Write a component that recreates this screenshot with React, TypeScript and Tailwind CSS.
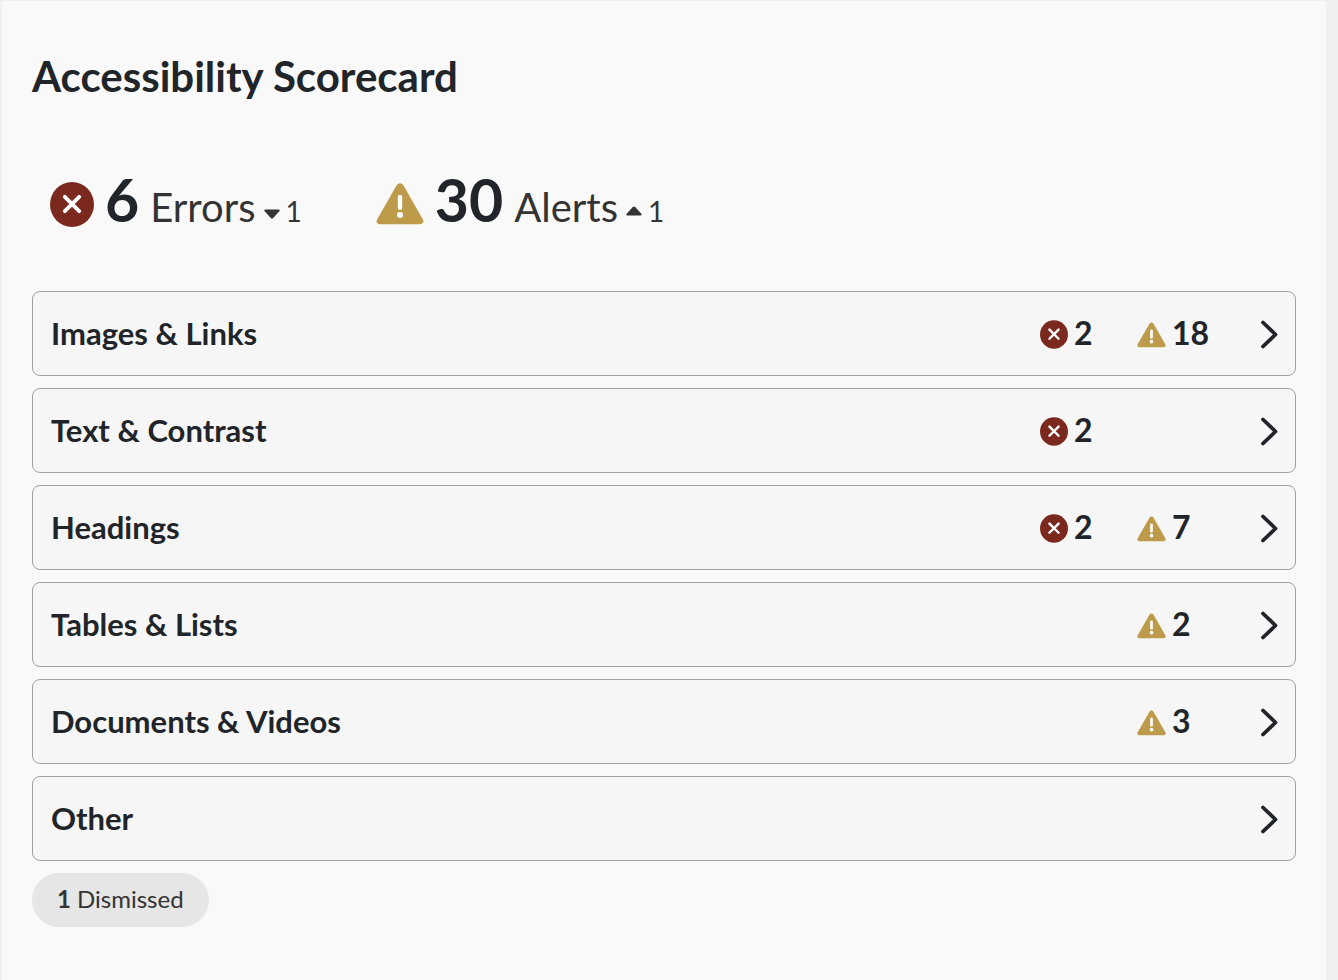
type IconProps = { className?: string };

type Category = {
  id: number;
  name: string;
  errors?: number;
  alerts?: number;
};

const categories: Category[] = [
  { id: 1, name: "Images & Links", errors: 2, alerts: 18 },
  { id: 2, name: "Text & Contrast", errors: 2 },
  { id: 3, name: "Headings", errors: 2, alerts: 7 },
  { id: 4, name: "Tables & Lists", alerts: 2 },
  { id: 5, name: "Documents & Videos", alerts: 3 },
  { id: 6, name: "Other" },
];

function ErrorIcon({ className }: IconProps) {
  return (
    <svg viewBox="0 0 44 45" className={className} aria-hidden="true">
      <ellipse cx="22" cy="22.5" rx="22" ry="22.5" fill="#7b291e" />
      <path d="M14.8 14.8 29.2 29.2M29.2 14.8 14.8 29.2" stroke="#fff" strokeWidth="3.8" strokeLinecap="round" />
    </svg>
  );
}

function AlertIcon({ className }: IconProps) {
  return (
    <svg viewBox="0 0 48 42" className={className} aria-hidden="true">
      <path
        d="M20.6 2.2Q22 .3 24 .3T27.4 2.2L46.9 36.4Q48 38.4 47 39.8T43.8 41.3H4.2Q2 41.3 1 39.8T1.1 36.4Z"
        fill="#bd9b4b"
      />
      <path d="M24 14V24.8" stroke="#fff" strokeWidth="4.4" strokeLinecap="round" />
      <circle cx="24" cy="32" r="3" fill="#fff" />
    </svg>
  );
}

function Caret({ className }: IconProps) {
  return (
    <svg viewBox="0 0 16 19" className={className} aria-hidden="true">
      <path d="M1.5 6.5H14.5Q16.3 6.7 15.3 8.2L9.2 15Q8 16.2 6.8 15L.7 8.2Q-.3 6.7 1.5 6.5Z" fill="#333" />
    </svg>
  );
}

function Chevron({ className }: IconProps) {
  return (
    <svg viewBox="0 0 17 29" className={className} aria-hidden="true">
      <path
        d="M2 2.5 14.5 14.5 2 26.5"
        fill="none"
        stroke="#212529"
        strokeWidth="3.8"
        strokeLinecap="round"
        strokeLinejoin="round"
      />
    </svg>
  );
}

export default function App() {
  return (
    <div className="min-h-screen bg-[#f0f0f0] pt-px pl-0.5 pr-3 flex font-['Lato',sans-serif] text-[#212529]">
      <main className="flex-1 bg-[#f9f9f9] px-[30px] pt-[50px] pb-12">
        <h1 className="text-[42px] leading-[50px] font-bold">Accessibility Scorecard</h1>

        {/* Totals */}
        <div className="flex items-center gap-[74px] mt-[63px] pl-[18px] h-20">
          <div className="flex items-center">
            <ErrorIcon className="w-11 h-[45px] mr-[11px]" />
            <div className="flex items-baseline pb-2">
              <span className="text-[59px] leading-[80px] font-bold mr-[11px]">6</span>
              <span className="text-[40px] text-[#333] mr-2">Errors</span>
              <Caret className="w-4 h-[19px] mr-1.5" />
              <span className="text-[28px] text-[#333]">1</span>
            </div>
          </div>
          <div className="flex items-center">
            <AlertIcon className="w-12 h-[42px] mr-[11px]" />
            <div className="flex items-baseline pb-2">
              <span className="text-[59px] leading-[80px] font-bold mr-[11px]">30</span>
              <span className="text-[40px] text-[#333] mr-2">Alerts</span>
              <Caret className="w-4 h-[19px] mr-1.5 rotate-180" />
              <span className="text-[28px] text-[#333]">1</span>
            </div>
          </div>
        </div>

        {/* Categories */}
        <ul className="flex flex-col gap-3 mt-[47px]">
          {categories.map((item) => (
            <li key={item.id}>
              <button
                type="button"
                className="flex w-full h-[85px] items-center pl-[18px] pr-[17px] pb-0.5 bg-[#f6f6f6] border border-[#a0a0a0] rounded-lg text-[32px] leading-10 font-bold text-left cursor-pointer"
              >
                <span className="flex-1 text-[31px]">{item.name}</span>
                <span className="flex items-center gap-1.5 w-[97px]">
                  {item.errors && (
                    <>
                      <ErrorIcon className="w-7 h-[29px] mt-1" />
                      {item.errors}
                    </>
                  )}
                </span>
                <span className="flex items-center gap-1.5 w-[124px]">
                  {item.alerts && (
                    <>
                      <AlertIcon className="w-[29px] h-[26px] mt-1" />
                      {item.alerts}
                    </>
                  )}
                </span>
                <Chevron className="w-[17px] h-[29px] mt-1" />
              </button>
            </li>
          ))}
        </ul>

        <button
          type="button"
          className="mt-3 h-[54px] px-[25px] pb-0.5 rounded-full bg-[#e6e6e6] text-2xl text-[#333] cursor-pointer"
        >
          <strong>1</strong> Dismissed
        </button>
      </main>
    </div>
  );
}
